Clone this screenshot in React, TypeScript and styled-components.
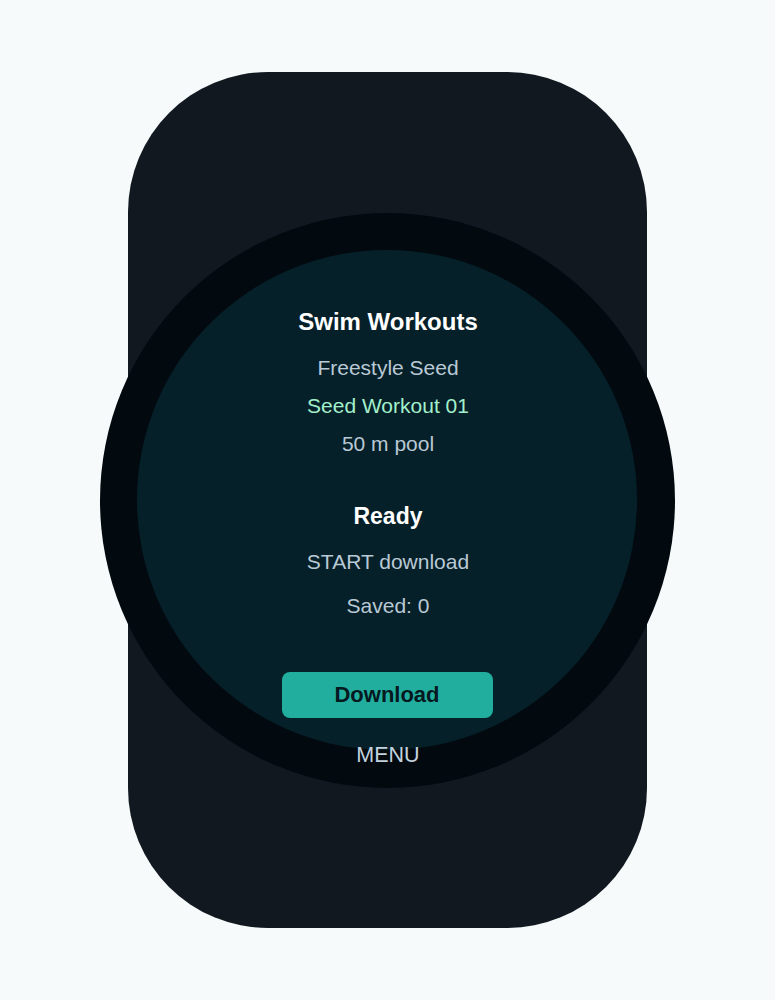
import styled, { createGlobalStyle } from 'styled-components'

const GlobalStyle = createGlobalStyle`
  html, body {
    margin: 0;
    padding: 0;
    background: #f6fafa;
    font-family: "Liberation Sans", Arial, sans-serif;
  }
`

const Page = styled.main`
  height: 1000px;
  display: flex;
  align-items: center;
  justify-content: center;
`

const WatchBody = styled.div`
  width: 519px;
  height: 856px;
  margin-right: 1px;
  border-radius: 140px;
  background: #111820;
  display: flex;
  align-items: center;
  justify-content: center;
`

const Bezel = styled.div`
  flex-shrink: 0;
  width: 575px;
  height: 575px;
  border-radius: 50%;
  background: #020a10;
  display: flex;
  align-items: center;
  justify-content: center;
`

const Screen = styled.section`
  flex-shrink: 0;
  width: 500px;
  height: 500px;
  border-radius: 50%;
  background: #062029;
  display: flex;
  flex-direction: column;
  align-items: center;
  padding: 57px 0 0 2px;
  box-sizing: border-box;

  & > * {
    flex-shrink: 0;
  }
`

const Title = styled.h1<{ size: number; gap?: number }>`
  margin: 0 0 ${p => p.gap ?? 0}px;
  font-size: ${p => p.size}px;
  line-height: 30px;
  font-weight: 700;
  color: #ffffff;
`

const Line = styled.p<{ accent?: boolean; gap?: number }>`
  margin: 0 0 ${p => p.gap ?? 0}px;
  font-size: 21px;
  line-height: 38px;
  color: ${p => (p.accent ? '#a3f0cc' : '#b9c9d5')};
`

const DownloadButton = styled.button`
  width: 211px;
  height: 46px;
  margin-right: 2px;
  padding: 0;
  border: none;
  border-radius: 8px;
  background: #21ae9f;
  color: #061820;
  font-family: inherit;
  font-size: 22px;
  font-weight: 700;
  cursor: pointer;
`

const MenuLabel = styled.span`
  margin-top: 25px;
  font-size: 21.5px;
  line-height: 24px;
  color: #c3d2de;
`

export default function App() {
  return (
    <>
      <GlobalStyle />
      <Page>
        <WatchBody>
          <Bezel>
            <Screen>
              <Title size={24} gap={12}>Swim Workouts</Title>
              <Line>Freestyle Seed</Line>
              <Line accent>Seed Workout 01</Line>
              <Line gap={38}>50 m pool</Line>
              <Title size={23} gap={12}>Ready</Title>
              <Line gap={6}>START download</Line>
              <Line gap={47}>Saved: 0</Line>
              <DownloadButton>Download</DownloadButton>
              <MenuLabel>MENU</MenuLabel>
            </Screen>
          </Bezel>
        </WatchBody>
      </Page>
    </>
  )
}
